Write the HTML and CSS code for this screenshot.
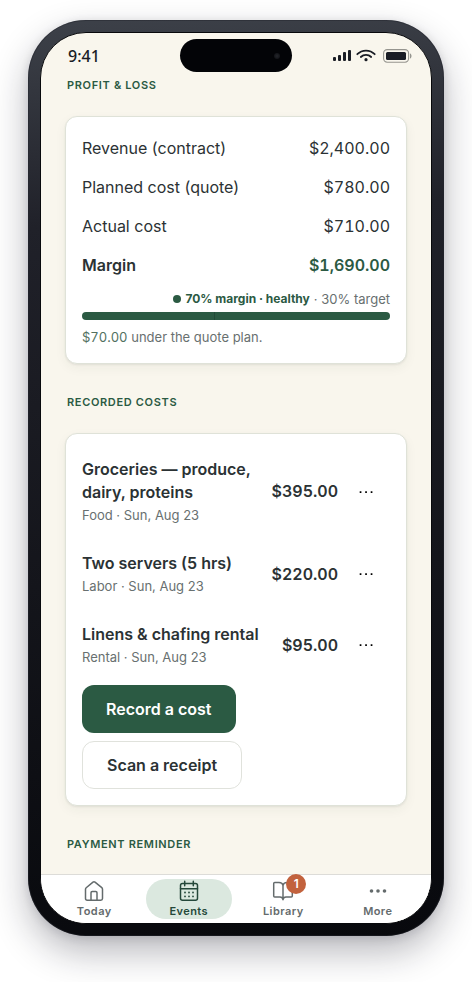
FILE: index.html
```html
<!DOCTYPE html>
<html lang="en">
<head>
<meta charset="utf-8">
<meta name="viewport" content="width=device-width, initial-scale=1">
<title>Event costs</title>
<link rel="stylesheet" href="styles.css">
</head>
<body>
<div class="phone">
  <div class="screen">
    <header class="status">
      <span class="time">9:41</span>
      <span class="island"><span class="camera"></span></span>
      <span class="signals">
        <svg width="20" height="14" viewBox="0 0 20 14" fill="#1a1d25" aria-hidden="true"><rect x="1" y="8" width="3" height="4" rx="1"/><rect x="6" y="6" width="3" height="6" rx="1"/><rect x="11" y="3" width="3" height="9" rx="1"/><rect x="16" y="1" width="3" height="11" rx="1"/></svg>
        <svg width="20" height="14" viewBox="0 0 20 14" fill="none" stroke="#1a1d25" stroke-width="1.8" stroke-linecap="round" aria-hidden="true"><path d="M1.3 5.200a12.300 12.300 0 0 1 17.400 0M4.800 8a7.500 7.500 0 0 1 10.400 0"/><circle cx="10" cy="10.700" r="1.600" fill="#1a1d25" stroke="none"/></svg>
        <svg class="battery" width="30" height="14" viewBox="0 0 30 14" fill="none" aria-hidden="true"><rect x=".6" y=".6" width="25" height="12.6" rx="3.6" stroke="#96958f" stroke-width="1.1"/><rect x="3" y="3" width="20" height="8" rx="1.5" fill="#1a1d25"/><path d="M27 4.5c2 .6 2 4.4 0 5z" fill="#96958f"/></svg>
      </span>
    </header>
    <main class="content">
      <h2 class="heading">Profit &amp; loss</h2>
      <section class="card">
        <dl class="totals">
          <div class="total"><dt>Revenue (contract)</dt><dd>$2,400.00</dd></div>
          <div class="total"><dt>Planned cost (quote)</dt><dd>$780.00</dd></div>
          <div class="total"><dt>Actual cost</dt><dd>$710.00</dd></div>
          <div class="total margin"><dt>Margin</dt><dd>$1,690.00</dd></div>
        </dl>
        <p class="health"><span class="dot"></span><strong>70% margin · healthy</strong><span>· 30% target</span></p>
        <div class="bar"><span class="target"></span></div>
        <p class="note"><span class="saved">$70.00</span> under the quote plan.</p>
      </section>
      <h2 class="heading">Recorded costs</h2>
      <section class="card">
        <ul class="costs">
          <li class="cost">
            <div class="detail"><h3>Groceries — produce, dairy, proteins</h3><p>Food · Sun, Aug 23</p></div>
            <span class="amount">$395.00</span>
            <button class="menu" aria-label="Groceries options"><svg width="16" height="4" viewBox="0 0 16 4" aria-hidden="true"><path d="M1.7 1.2h1.7v1.7H1.7zM7.2 1.2h1.7v1.7H7.2zM12.7 1.2h1.7v1.7h-1.7z"/></svg></button>
          </li>
          <li class="cost">
            <div class="detail"><h3>Two servers (5 hrs)</h3><p>Labor · Sun, Aug 23</p></div>
            <span class="amount">$220.00</span>
            <button class="menu" aria-label="Servers options"><svg width="16" height="4" viewBox="0 0 16 4" aria-hidden="true"><path d="M1.7 1.2h1.7v1.7H1.7zM7.2 1.2h1.7v1.7H7.2zM12.7 1.2h1.7v1.7h-1.7z"/></svg></button>
          </li>
          <li class="cost">
            <div class="detail"><h3>Linens &amp; chafing rental</h3><p>Rental · Sun, Aug 23</p></div>
            <span class="amount">$95.00</span>
            <button class="menu" aria-label="Linens options"><svg width="16" height="4" viewBox="0 0 16 4" aria-hidden="true"><path d="M1.7 1.2h1.7v1.7H1.7zM7.2 1.2h1.7v1.7H7.2zM12.7 1.2h1.7v1.7h-1.7z"/></svg></button>
          </li>
        </ul>
        <div class="actions">
          <button class="btn primary">Record a cost</button>
          <button class="btn">Scan a receipt</button>
        </div>
      </section>
      <h2 class="heading">Payment reminder</h2>
    </main>
    <nav class="tabs">
      <a class="tab" href="#today">
        <svg width="22" height="22" viewBox="0 0 22 22" aria-hidden="true"><path d="M2.500 9.200Q2.500 8.300 3.200 7.700L10 2.100q1-.8 2 0l6.800 5.600q.7.6.7 1.500V18.500q0 1.700-1.700 1.700H4.200q-1.700 0-1.700-1.700zM8 20v-7.200q0-1.200 1.200-1.200h3.600q1.200 0 1.200 1.200V20"/></svg>
        <span>Today</span>
      </a>
      <a class="tab current" href="#events" aria-current="page">
        <svg width="22" height="22" viewBox="0 0 22 22" aria-hidden="true"><rect x="2.500" y="3.500" width="17" height="16.700" rx="2"/><path d="M2.500 8.800h17M6.700 1.300v4.400M15.300 1.300v4.400"/><path class="pips" d="M7 12.500h.01M11 12.500h.01M15 12.500h.01M7 16.400h.01M11 16.400h.01M15 16.400h.01"/></svg>
        <span>Events</span>
      </a>
      <a class="tab" href="#library">
        <span class="icon"><svg width="22" height="22" viewBox="0 0 22 22" aria-hidden="true"><path d="M11 5.500v14.200M11 5.500Q10.500 2.500 7 2.500H2.700q-1 0-1 1v12.600q0 1 1 1H8q2.500 0 3 2.600.5-2.600 3-2.600h5.300q1 0 1-1V3.500q0-1-1-1H15q-3.500 0-4 3z"/></svg><span class="badge">1</span></span>
        <span>Library</span>
      </a>
      <a class="tab" href="#more">
        <svg width="22" height="22" viewBox="0 0 22 22" aria-hidden="true"><g fill="currentColor" stroke="none"><circle cx="4.500" cy="11" r="1.800"/><circle cx="11" cy="11" r="1.800"/><circle cx="17.500" cy="11" r="1.800"/></g></svg>
        <span>More</span>
      </a>
    </nav>
  </div>
</div>
</body>
</html>
```
FILE: styles.css
```css
* { box-sizing: border-box; }

body {
  margin: 0;
  padding: 20px 28px 46px;
  background: #fff;
  color: #2b3234;
  font: 16px/23px Inter, "Liberation Sans", sans-serif;
}

h2, h3, p, dl, dd, ul { margin: 0; padding: 0; }
ul { list-style: none; }
button { font: inherit; color: inherit; cursor: pointer; }

.phone {
  max-width: 416px;
  margin: 0 auto;
  padding: 12px;
  border-radius: 58px;
  background: linear-gradient(176deg, #3d4149 0%, #202129 22%, #14151b 60%, #08090d 100%);
  box-shadow: inset 0 0 0 1px rgba(35, 38, 46, .5), 0 16px 36px rgba(20, 20, 35, .3), 0 2px 10px rgba(20, 20, 35, .12);
}

.screen {
  overflow: hidden;
  border: 1px solid #08090c;
  border-radius: 46px;
  background: #f9f6ed;
}

.status {
  display: grid;
  grid-template-columns: 1fr 112px 1fr;
  align-items: center;
  height: 45px;
}
.time { padding-left: 27px; font: 500 16px/20px "Noto Sans", "Open Sans", sans-serif; color: #1a1d25; }
.island {
  display: flex;
  align-items: center;
  justify-content: flex-end;
  height: 33px;
  padding-right: 12px;
  border-radius: 17px;
  background: #030407;
}
.camera { width: 6px; height: 6px; border-radius: 50%; background: radial-gradient(#24262b, #0b0c10); }
.signals { display: flex; align-items: center; justify-content: flex-end; gap: 4px; padding-right: 18px; }
.battery { margin-left: 3px; }

.content { padding: 0 24px 23px; }

.heading {
  padding-left: 2px;
  color: #2b5a43;
  font-size: 11px;
  line-height: 14px;
  font-weight: 600;
  letter-spacing: .06em;
  text-transform: uppercase;
}

.card {
  margin: 24px 0 31px;
  padding: 16px;
  border: 1px solid #dfe2d8;
  border-radius: 12px;
  background: #fff;
  box-shadow: 0 1px 2px rgba(40, 50, 40, .08), 0 4px 12px rgba(40, 50, 40, .05);
}

.totals { display: grid; gap: 16px; padding-top: 4px; }
.total { display: flex; justify-content: space-between; }
.total dd { font-variant-numeric: tabular-nums; }
.margin { font-weight: 600; }
.margin dd { color: #2b5a43; }

.health {
  display: flex;
  align-items: center;
  justify-content: flex-end;
  gap: 4px;
  margin: 12px 0 3px;
  color: #687070;
  font-size: 13px;
  line-height: 20px;
}
.health strong { color: #2b5a43; font-size: 12px; font-weight: 700; }
.dot { width: 8px; height: 8px; border-radius: 50%; background: #2b5a43; }
.bar { height: 8px; border-radius: 4px; background: #2b5a43; }
.target { display: block; width: 1px; height: 8px; margin-left: 43%; background: #224a38; }
.note { margin-top: 7px; color: #687070; font-size: 13px; line-height: 20px; }
.saved { color: #52715f; font-variant-numeric: tabular-nums; }

.costs { display: grid; gap: 27px; padding: 8px 0 18px; }
.cost { display: flex; align-items: center; gap: 4px; }
.detail { flex: 1; }
.detail h3 { font-size: 16px; line-height: 23px; font-weight: 600; }
.detail p { margin-top: 1px; color: #687070; font-size: 13px; line-height: 20px; }
.amount { font-weight: 600; font-variant-numeric: tabular-nums; }
.menu {
  display: flex;
  align-items: center;
  justify-content: center;
  width: 48px;
  height: 44px;
  padding: 0;
  border: 0;
  background: none;
}

.actions { display: flex; flex-direction: column; align-items: flex-start; gap: 8px; }
.btn {
  height: 48px;
  padding: 0 24px;
  border: 1px solid #e0e2dc;
  border-radius: 12px;
  background: #fff;
  font-weight: 600;
}
.primary { border: 0; background: #2b5a43; color: #fff; }

.tabs {
  display: grid;
  grid-template-columns: repeat(4, 1fr);
  padding: 4px 6px;
  border-top: 1px solid #dddcd8;
  background: #fff;
}
.tab {
  display: flex;
  flex-direction: column;
  align-items: center;
  height: 40px;
  margin: 0 4px;
  padding-top: 1px;
  border-radius: 20px;
  color: #646b6c;
  font-size: 11px;
  line-height: 18px;
  font-weight: 600;
  letter-spacing: .04em;
  text-decoration: none;
}
.tab svg { display: block; flex-shrink: 0; fill: none; stroke: currentColor; stroke-width: 1.5; stroke-linecap: round; stroke-linejoin: round; }
.tab .pips { stroke-width: 1.8; }
.current { background: #dbe8df; color: #25483a; }
.icon { position: relative; height: 22px; }
.badge {
  position: absolute;
  top: -6px;
  right: -12px;
  width: 20px;
  height: 20px;
  border-radius: 50%;
  background: #c2623d;
  color: #fff;
  font-size: 12px;
  line-height: 20px;
  letter-spacing: 0;
  text-align: center;
}
```
